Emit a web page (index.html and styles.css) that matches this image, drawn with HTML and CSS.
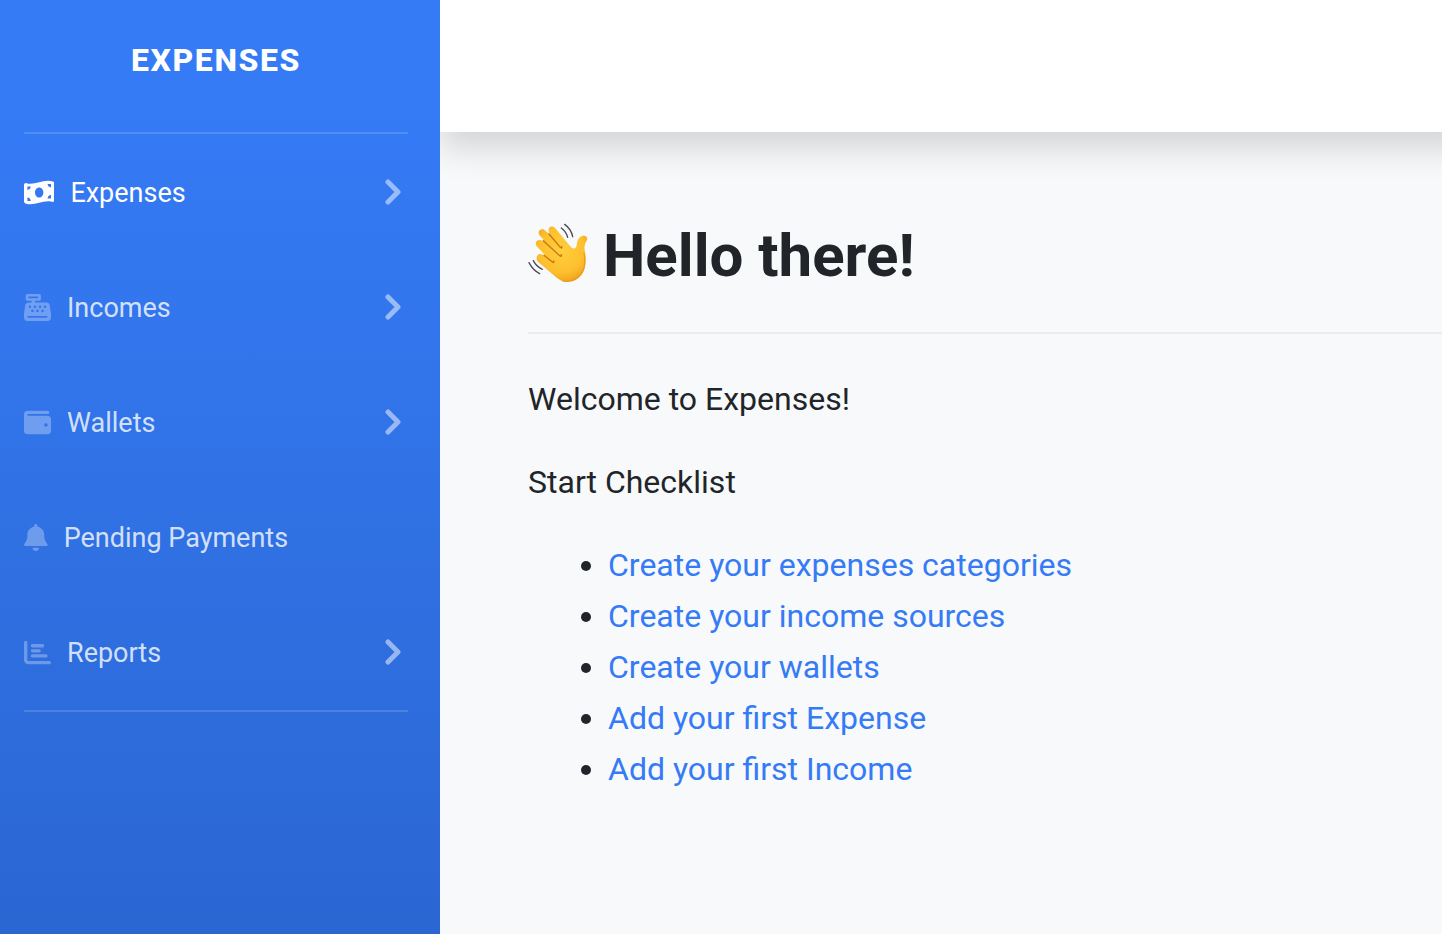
FILE: index.html
```html
<!DOCTYPE html>
<html lang="en">
<head>
<meta charset="utf-8">
<meta name="viewport" content="width=device-width, initial-scale=1">
<title>Expenses</title>
<link rel="stylesheet" href="styles.css">
</head>
<body>
<div class="layout">
  <aside class="sidebar">
    <a class="brand" href="#">Expenses</a>
    <hr class="sidebar-divider">
    <nav class="nav" aria-label="Main">
      <a class="nav-link active" href="#">
        <svg class="icon" viewBox="0 0 576 512" aria-hidden="true"><path d="M0 112.5V422.3c0 18 10.1 35 27 41.3c87 32.5 174 10.3 261-11.9c79.8-20.3 159.6-40.7 239.3-18.9c23 6.3 48.7-9.5 48.7-33.4V89.7c0-18-10.1-35-27-41.3C462 15.9 375 38.1 288 60.3C208.2 80.6 128.4 100.9 48.7 79.1C25.6 72.8 0 88.6 0 112.5zM288 352c-44.2 0-80-43-80-96s35.8-96 80-96s80 43 80 96s-35.8 96-80 96zM64 352c35.3 0 64 28.7 64 64H64V352zm64-208c0 35.3-28.7 64-64 64V144h64zM512 304v64H448c0-35.3 28.7-64 64-64zM448 96h64v64c-35.3 0-64-28.7-64-64z"/></svg>
        <span class="nav-label">Expenses</span>
        <svg class="chevron" viewBox="0 0 16 26" aria-hidden="true"><path d="M3 3L13 13L3 23"/></svg>
      </a>
      <a class="nav-link" href="#">
        <svg class="icon" viewBox="0 0 512 512" aria-hidden="true"><path fill-rule="evenodd" d="M64 0C46.3 0 32 14.3 32 32V96c0 17.7 14.3 32 32 32h80v32H87c-31.6 0-58.5 23.1-63.3 54.4L1.1 364.1C.4 368.8 0 373.6 0 378.4V448c0 35.3 28.7 64 64 64H448c35.3 0 64-28.7 64-64V378.4c0-4.8-.4-9.6-1.1-14.4L488.2 214.4C483.5 183.1 456.6 160 425 160H208V128h80c17.7 0 32-14.3 32-32V32c0-17.7-14.3-32-32-32H64zM96 48H256c8.8 0 16 7.2 16 16s-7.2 16-16 16H96c-8.8 0-16-7.2-16-16s7.2-16 16-16zM64 432c0-8.8 7.2-16 16-16H432c8.8 0 16 7.2 16 16s-7.2 16-16 16H80c-8.8 0-16-7.2-16-16zM88 240a24 24 0 1 0 48 0a24 24 0 1 0-48 0zM184 240a24 24 0 1 0 48 0a24 24 0 1 0-48 0zM280 240a24 24 0 1 0 48 0a24 24 0 1 0-48 0zM376 240a24 24 0 1 0 48 0a24 24 0 1 0-48 0zM136 320a24 24 0 1 0 48 0a24 24 0 1 0-48 0zM232 320a24 24 0 1 0 48 0a24 24 0 1 0-48 0zM328 320a24 24 0 1 0 48 0a24 24 0 1 0-48 0z"/></svg>
        <span class="nav-label">Incomes</span>
        <svg class="chevron" viewBox="0 0 16 26" aria-hidden="true"><path d="M3 3L13 13L3 23"/></svg>
      </a>
      <a class="nav-link" href="#">
        <svg class="icon" viewBox="0 0 512 512" aria-hidden="true"><path fill-rule="evenodd" d="M64 32C28.7 32 0 60.7 0 96V416c0 35.3 28.7 64 64 64H448c35.3 0 64-28.7 64-64V192c0-35.3-28.7-64-64-64H80c-8.8 0-16-7.2-16-16s7.2-16 16-16H448c17.7 0 32-14.3 32-32s-14.3-32-32-32H64zM416 272a32 32 0 1 1 0 64a32 32 0 1 1 0-64z"/></svg>
        <span class="nav-label">Wallets</span>
        <svg class="chevron" viewBox="0 0 16 26" aria-hidden="true"><path d="M3 3L13 13L3 23"/></svg>
      </a>
      <a class="nav-link" href="#">
        <svg class="icon" viewBox="0 0 448 512" aria-hidden="true"><path d="M224 0c-17.7 0-32 14.3-32 32V49.9C119.5 61.4 64 124.2 64 200v33.4c0 45.4-15.5 89.5-43.8 124.9L5.3 377c-5.8 7.2-6.9 17.1-2.9 25.4S14.8 416 24 416H424c9.2 0 17.6-5.3 21.6-13.6s2.9-18.2-2.9-25.4l-14.9-18.6C399.5 322.9 384 278.8 384 233.4V200c0-75.8-55.5-138.6-128-150.1V32c0-17.7-14.3-32-32-32zM224 512c17 0 33.3-6.7 45.3-18.7S288 465 288 448H160c0 17 6.7 33.3 18.7 45.3S207 512 224 512z"/></svg>
        <span class="nav-label">Pending Payments</span>
      </a>
      <a class="nav-link" href="#">
        <svg class="icon icon-line" viewBox="0 0 512 512" aria-hidden="true"><path d="M32 64V400a48 48 0 0 0 48 48H480M160 128H352M160 224H288M160 320H416"/></svg>
        <span class="nav-label">Reports</span>
        <svg class="chevron" viewBox="0 0 16 26" aria-hidden="true"><path d="M3 3L13 13L3 23"/></svg>
      </a>
    </nav>
    <hr class="sidebar-divider">
  </aside>
  <div class="page">
    <header class="topbar"></header>
    <main class="content">
      <h1 class="title">
        <svg class="wave" viewBox="54 36 180 180" role="img" aria-label="Waving hand">
          <defs>
            <radialGradient id="skin" gradientUnits="userSpaceOnUse" cx="155" cy="120" r="105">
              <stop offset="0" stop-color="#ffcf3d"/>
              <stop offset=".65" stop-color="#fdbf2d"/>
              <stop offset="1" stop-color="#ec9c1d"/>
            </radialGradient>
          </defs>
          <path fill="url(#skin)" d="M117 55C121 47 130 48 136 55L180 108Q188 118 195 115Q200 112 201 100C203 84 213 76 224 77Q234 80 231 90C223 103 222 112 225 125C229 145 228 167 221 184C211 205 192 216 173 216C157 216 145 208 134 198L84 155C77 147 79 136 88 132Q94 131 101 136L104 134L80 109C73 99 80 89 90 90Q94 90 98 94L101 90L88 75C82 64 90 55 101 58L109 65L119 72Q114 61 117 55Z"/>
          <path fill="none" stroke="#c9741a" stroke-width="4" stroke-linecap="round" stroke-linejoin="round" d="M117 72L151 112Q157 117 155 109M100 92L149 137Q156 142 154 134M102 136L127 156Q133 161 131 153"/>
          <path fill="none" stroke="#e99a20" stroke-width="3" stroke-linecap="round" d="M159 214Q205 217 220 181Q228 158 222 128"/>
          <path fill="none" stroke="#484b50" stroke-width="4" stroke-linecap="round" d="M164 43Q184 57 188 80M154 54Q169 66 173 82M57 158Q69 181 89 191M70 152Q79 170 97 178"/>
        </svg>
        <span>Hello there!</span>
      </h1>
      <hr class="content-divider">
      <p class="text">Welcome to Expenses!</p>
      <p class="text">Start Checklist</p>
      <ul class="checklist">
        <li><a href="#">Create your expenses categories</a></li>
        <li><a href="#">Create your income sources</a></li>
        <li><a href="#">Create your wallets</a></li>
        <li><a href="#">Add your first Expense</a></li>
        <li><a href="#">Add your first Income</a></li>
      </ul>
    </main>
  </div>
</div>
</body>
</html>
```
FILE: styles.css
```css
* {
  box-sizing: border-box;
}

body {
  margin: 0;
  font-family: Roboto, "Liberation Sans", sans-serif;
  font-size: 32px;
  line-height: 51px;
  color: #212529;
  background: #f8f9fb;
}

a {
  color: #357bf6;
  text-decoration: none;
}

.layout {
  display: flex;
  min-height: 100vh;
}

.sidebar {
  position: relative;
  z-index: 1;
  flex: 0 0 440px;
  background: linear-gradient(180deg, #357bf6 10%, #2b67d3 100%);
}

.brand {
  display: flex;
  align-items: center;
  justify-content: center;
  height: 132px;
  padding: 0 32px 12px 24px;
  color: #fff;
  font-weight: 800;
  letter-spacing: 0.05em;
  text-transform: uppercase;
}

.sidebar-divider {
  height: 2px;
  margin: 0 32px 0 24px;
  border: 0;
  background: rgba(255, 255, 255, 0.15);
}

.nav {
  padding-top: 1px;
}

.nav-link {
  display: flex;
  align-items: center;
  gap: 16px;
  padding: 32px 39px 32px 24px;
  font-size: 27px;
  color: rgba(255, 255, 255, 0.8);
}

.nav-link.active {
  color: #fff;
}

.nav-label {
  margin: 1px 0 -1px;
}

.icon {
  height: 27px;
  fill: rgba(255, 255, 255, 0.3);
}

.active .icon {
  fill: #fff;
}

.icon-line {
  fill: none;
  stroke: rgba(255, 255, 255, 0.3);
  stroke-width: 64;
  stroke-linecap: round;
}

.chevron {
  width: 16px;
  height: 26px;
  margin: 0 0 2px auto;
  fill: none;
  stroke: rgba(255, 255, 255, 0.5);
  stroke-width: 5;
  stroke-linecap: round;
  stroke-linejoin: round;
}

.page {
  flex: 1;
  min-width: 0;
  overflow-x: clip;
}

.topbar {
  height: 132px;
  margin-right: -32px;
  background: #fff;
  box-shadow: 0 16px 32px rgba(0, 0, 0, 0.15);
}

.content {
  padding: 86px 0 64px 88px;
}

.title {
  display: flex;
  align-items: center;
  gap: 15px;
  margin: 0;
  font-size: 60px;
  font-weight: 700;
  line-height: 76px;
}

.wave {
  width: 60px;
  height: 60px;
  margin-bottom: 8px;
}

.content-divider {
  height: 2px;
  margin: 38px 0 40px;
  border: 0;
  background: #ebecee;
}

.text {
  margin: 0 0 32px;
}

.checklist {
  margin: 0;
  padding-left: 80px;
}
```
